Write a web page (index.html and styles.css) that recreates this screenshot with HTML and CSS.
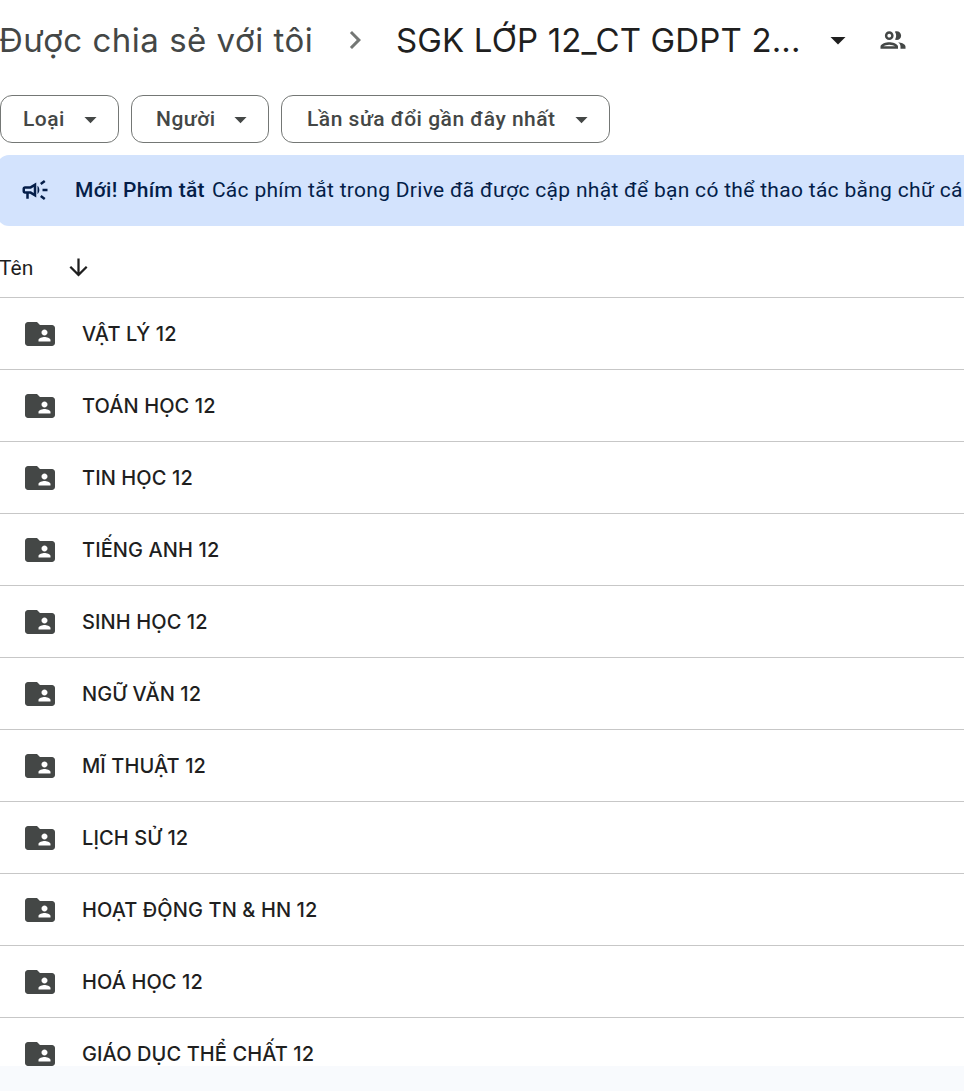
FILE: index.html
```html
<!DOCTYPE html>
<html lang="vi">
<head>
  <meta charset="UTF-8" />
  <meta name="viewport" content="width=device-width, initial-scale=1.0" />
  <title>SGK LỚP 12_CT GDPT 2018</title>
  <link rel="stylesheet" href="styles.css">
</head>
<body>
  <div class="page">
    <header class="crumbs">
      <span class="crumb-parent">Được chia sẻ với tôi</span>
      <svg class="crumb-sep" viewBox="0 0 24 24"><path d="M10 6L8.59 7.41 13.17 12l-4.58 4.59L10 18l6-6z"/></svg>
      <span class="crumb-current">SGK LỚP 12_CT GDPT 2...</span>
      <svg class="crumb-caret" viewBox="0 0 24 24"><path d="M7 10l5 5 5-5z"/></svg>
      <svg class="crumb-people" viewBox="0 0 24 24"><path d="M9 13.75c-2.34 0-7 1.17-7 3.5V19h14v-1.75c0-2.33-4.66-3.5-7-3.5zM4.34 17c.84-.58 2.87-1.25 4.66-1.25s3.82.67 4.66 1.25H4.34zM9 12c1.93 0 3.5-1.57 3.5-3.5S10.93 5 9 5 5.5 6.57 5.5 8.5 7.07 12 9 12zm0-5c.83 0 1.5.67 1.5 1.5S9.83 10 9 10s-1.5-.67-1.5-1.5S8.17 7 9 7zm7.04 6.81c1.16.84 1.96 1.96 1.96 3.44V19h4v-1.75c0-2.02-3.5-3.17-5.96-3.44zM15 12c1.93 0 3.5-1.57 3.5-3.5S16.93 5 15 5c-.54 0-1.04.13-1.5.35.63.89 1 1.98 1 3.15s-.37 2.26-1 3.15c.46.22.96.35 1.5.35z"/></svg>
    </header>

    <div class="filters">
      <button class="filter filter-type">Loại <svg viewBox="0 0 24 24"><path d="M7 10l5 5 5-5z"/></svg></button>
      <button class="filter filter-people">Người <svg viewBox="0 0 24 24"><path d="M7 10l5 5 5-5z"/></svg></button>
      <button class="filter filter-date">Lần sửa đổi gần đây nhất <svg viewBox="0 0 24 24"><path d="M7 10l5 5 5-5z"/></svg></button>
    </div>

    <div class="notice">
      <svg class="notice-icon" viewBox="0 0 24 24"><path d="M18 11v2h4v-2h-4zm-2 6.61c.96.71 2.21 1.65 3.2 2.39.4-.53.8-1.07 1.2-1.6-.99-.74-2.24-1.68-3.2-2.4-.4.54-.8 1.08-1.2 1.61zM20.4 5.6c-.4-.53-.8-1.07-1.2-1.6-.99.74-2.24 1.68-3.2 2.4.4.53.8 1.07 1.2 1.6.96-.72 2.21-1.65 3.2-2.4zM4 9c-1.1 0-2 .9-2 2v2c0 1.1.9 2 2 2h1v4h2v-4h1l5 3V6L8 9H4zm5.03 1.71L11 9.53v4.94l-1.97-1.18-.48-.29H4v-2h4.55l.48-.29zM15.5 12c0-1.33-.58-2.53-1.5-3.35v6.69c.92-.81 1.5-2.01 1.5-3.34z"/></svg>
      <strong>Mới! Phím tắt</strong>
      <span>Các phím tắt trong Drive đã được cập nhật để bạn có thể thao tác bằng chữ cá</span>
    </div>

    <div class="list-head">
      <span>Tên</span>
      <svg viewBox="0 0 24 24"><path d="M20 12l-1.41-1.41L13 16.17V4h-2v12.17l-5.58-5.59L4 12l8 8 8-8z"/></svg>
    </div>

    <ul class="list">
      <li class="row"><svg viewBox="0 0 24 24"><path d="M20 6h-8l-2-2H4c-1.1 0-1.99.9-1.99 2L2 18c0 1.1.9 2 2 2h16c1.1 0 2-.9 2-2V8c0-1.1-.9-2-2-2zm-5 3c1.1 0 2 .9 2 2s-.9 2-2 2-2-.9-2-2 .9-2 2-2zm4 8h-8v-1c0-1.33 2.67-2 4-2s4 .67 4 2v1z"/></svg>VẬT LÝ 12</li>
      <li class="row"><svg viewBox="0 0 24 24"><path d="M20 6h-8l-2-2H4c-1.1 0-1.99.9-1.99 2L2 18c0 1.1.9 2 2 2h16c1.1 0 2-.9 2-2V8c0-1.1-.9-2-2-2zm-5 3c1.1 0 2 .9 2 2s-.9 2-2 2-2-.9-2-2 .9-2 2-2zm4 8h-8v-1c0-1.33 2.67-2 4-2s4 .67 4 2v1z"/></svg>TOÁN HỌC 12</li>
      <li class="row"><svg viewBox="0 0 24 24"><path d="M20 6h-8l-2-2H4c-1.1 0-1.99.9-1.99 2L2 18c0 1.1.9 2 2 2h16c1.1 0 2-.9 2-2V8c0-1.1-.9-2-2-2zm-5 3c1.1 0 2 .9 2 2s-.9 2-2 2-2-.9-2-2 .9-2 2-2zm4 8h-8v-1c0-1.33 2.67-2 4-2s4 .67 4 2v1z"/></svg>TIN HỌC 12</li>
      <li class="row"><svg viewBox="0 0 24 24"><path d="M20 6h-8l-2-2H4c-1.1 0-1.99.9-1.99 2L2 18c0 1.1.9 2 2 2h16c1.1 0 2-.9 2-2V8c0-1.1-.9-2-2-2zm-5 3c1.1 0 2 .9 2 2s-.9 2-2 2-2-.9-2-2 .9-2 2-2zm4 8h-8v-1c0-1.33 2.67-2 4-2s4 .67 4 2v1z"/></svg>TIẾNG ANH 12</li>
      <li class="row"><svg viewBox="0 0 24 24"><path d="M20 6h-8l-2-2H4c-1.1 0-1.99.9-1.99 2L2 18c0 1.1.9 2 2 2h16c1.1 0 2-.9 2-2V8c0-1.1-.9-2-2-2zm-5 3c1.1 0 2 .9 2 2s-.9 2-2 2-2-.9-2-2 .9-2 2-2zm4 8h-8v-1c0-1.33 2.67-2 4-2s4 .67 4 2v1z"/></svg>SINH HỌC 12</li>
      <li class="row"><svg viewBox="0 0 24 24"><path d="M20 6h-8l-2-2H4c-1.1 0-1.99.9-1.99 2L2 18c0 1.1.9 2 2 2h16c1.1 0 2-.9 2-2V8c0-1.1-.9-2-2-2zm-5 3c1.1 0 2 .9 2 2s-.9 2-2 2-2-.9-2-2 .9-2 2-2zm4 8h-8v-1c0-1.33 2.67-2 4-2s4 .67 4 2v1z"/></svg>NGỮ VĂN 12</li>
      <li class="row"><svg viewBox="0 0 24 24"><path d="M20 6h-8l-2-2H4c-1.1 0-1.99.9-1.99 2L2 18c0 1.1.9 2 2 2h16c1.1 0 2-.9 2-2V8c0-1.1-.9-2-2-2zm-5 3c1.1 0 2 .9 2 2s-.9 2-2 2-2-.9-2-2 .9-2 2-2zm4 8h-8v-1c0-1.33 2.67-2 4-2s4 .67 4 2v1z"/></svg>MĨ THUẬT 12</li>
      <li class="row"><svg viewBox="0 0 24 24"><path d="M20 6h-8l-2-2H4c-1.1 0-1.99.9-1.99 2L2 18c0 1.1.9 2 2 2h16c1.1 0 2-.9 2-2V8c0-1.1-.9-2-2-2zm-5 3c1.1 0 2 .9 2 2s-.9 2-2 2-2-.9-2-2 .9-2 2-2zm4 8h-8v-1c0-1.33 2.67-2 4-2s4 .67 4 2v1z"/></svg>LỊCH SỬ 12</li>
      <li class="row"><svg viewBox="0 0 24 24"><path d="M20 6h-8l-2-2H4c-1.1 0-1.99.9-1.99 2L2 18c0 1.1.9 2 2 2h16c1.1 0 2-.9 2-2V8c0-1.1-.9-2-2-2zm-5 3c1.1 0 2 .9 2 2s-.9 2-2 2-2-.9-2-2 .9-2 2-2zm4 8h-8v-1c0-1.33 2.67-2 4-2s4 .67 4 2v1z"/></svg>HOẠT ĐỘNG TN &amp; HN 12</li>
      <li class="row"><svg viewBox="0 0 24 24"><path d="M20 6h-8l-2-2H4c-1.1 0-1.99.9-1.99 2L2 18c0 1.1.9 2 2 2h16c1.1 0 2-.9 2-2V8c0-1.1-.9-2-2-2zm-5 3c1.1 0 2 .9 2 2s-.9 2-2 2-2-.9-2-2 .9-2 2-2zm4 8h-8v-1c0-1.33 2.67-2 4-2s4 .67 4 2v1z"/></svg>HOÁ HỌC 12</li>
      <li class="row"><svg viewBox="0 0 24 24"><path d="M20 6h-8l-2-2H4c-1.1 0-1.99.9-1.99 2L2 18c0 1.1.9 2 2 2h16c1.1 0 2-.9 2-2V8c0-1.1-.9-2-2-2zm-5 3c1.1 0 2 .9 2 2s-.9 2-2 2-2-.9-2-2 .9-2 2-2zm4 8h-8v-1c0-1.33 2.67-2 4-2s4 .67 4 2v1z"/></svg>GIÁO DỤC THỂ CHẤT 12</li>
    </ul>
  </div>
</body>
</html>
```

FILE: styles.css
```css
html, body {
  height: 100%;
}

body {
  margin: 0;
  background-color: #f8fafd;
  font-family: 'Roboto', sans-serif;
  overflow: hidden;
}

.page {
  display: flex;
  flex-direction: column;
  height: 1066px;
  background-color: #fff;
  overflow: hidden;
}

svg {
  display: block;
  flex-shrink: 0;
  fill: currentColor;
}

.crumbs {
  display: flex;
  align-items: center;
  height: 80px;
  flex-shrink: 0;
  font-family: 'Inter', sans-serif;
  font-size: 33px;
  white-space: nowrap;
}

.crumb-parent {
  width: 338px;
  margin-left: -1px;
  color: #444746;
  letter-spacing: 0.5px;
}

.crumb-sep {
  width: 36px;
  height: 36px;
  color: #747775;
}

.crumb-current {
  width: 424px;
  margin-left: 23px;
  color: #1f1f1f;
  letter-spacing: 0.15px;
}

.crumb-caret {
  width: 36px;
  height: 36px;
  color: #1f1f1f;
}

.crumb-people {
  width: 30px;
  height: 30px;
  margin-left: 22px;
  color: #444746;
}

.filters {
  display: flex;
  gap: 12px;
  margin-top: 15px;
  flex-shrink: 0;
}

.filter {
  display: flex;
  align-items: center;
  justify-content: space-between;
  height: 48px;
  margin: 0;
  padding: 0 13px 0 22px;
  background: #fff;
  border: 1px solid #747775;
  border-radius: 12px;
  color: #444746;
  font-family: 'Roboto', sans-serif;
  font-size: 21px;
  font-weight: 500;
  letter-spacing: 0.5px;
}

.filter svg {
  width: 29px;
  height: 29px;
}

.filter-type {
  width: 119px;
}

.filter-people {
  width: 138px;
  padding-left: 24px;
}

.filter-date {
  width: 329px;
  padding-left: 25px;
}

.notice {
  display: flex;
  align-items: center;
  height: 70px;
  padding-bottom: 1px;
  margin-top: 12px;
  margin-left: -3px;
  padding-left: 23px;
  flex-shrink: 0;
  background-color: #d3e3fd;
  border-radius: 12px 0 0 12px;
  color: #041e49;
  font-size: 21px;
  letter-spacing: 0.3px;
  white-space: nowrap;
  overflow: hidden;
}

.notice-icon {
  width: 30px;
  height: 30px;
  margin-right: 25px;
}

.notice strong {
  margin-right: 7px;
  font-weight: 500;
}

.list-head {
  display: flex;
  align-items: center;
  height: 59px;
  padding-top: 12px;
  flex-shrink: 0;
  border-bottom: 1px solid #c7c7c7;
  color: #1f1f1f;
  font-size: 21px;
}

.list-head span {
  width: 66px;
  margin-left: -1px;
}

.list-head svg {
  width: 27px;
  height: 27px;
}

.list {
  margin: 0;
  padding: 0;
  list-style: none;
}

.row {
  display: flex;
  align-items: center;
  height: 71px;
  padding-left: 22px;
  border-bottom: 1px solid #c7c7c7;
  color: #1f1f1f;
  font-family: 'Inter', sans-serif;
  font-size: 20px;
  font-weight: 500;
  letter-spacing: 0.1px;
}

.row svg {
  width: 36px;
  height: 36px;
  margin-right: 24px;
  color: #444746;
}
```
